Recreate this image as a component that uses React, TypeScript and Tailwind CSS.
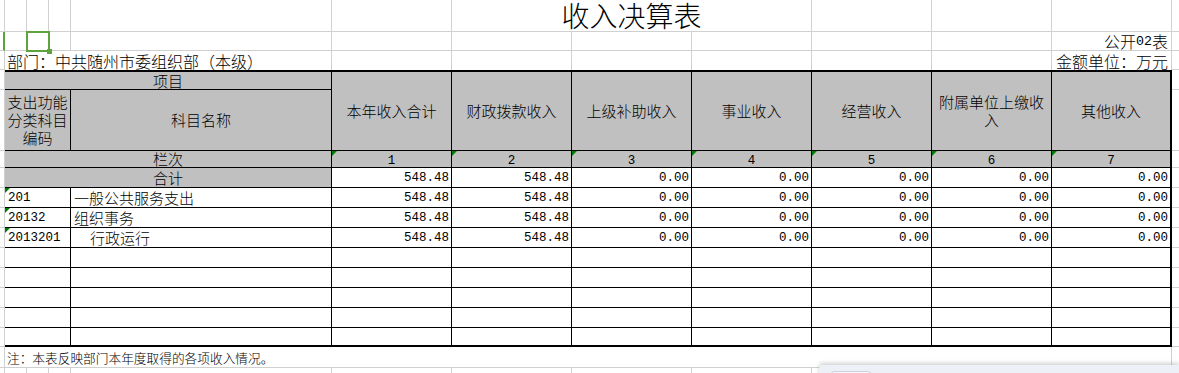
import React from "react"

// 收入决算表 — spreadsheet view

const GRID = "border-r border-b border-[#d0d0d0]"
const GRID_B = "border-b border-[#d0d0d0]"
const GRID_R = "border-r border-[#d0d0d0]"
const HEAD = "bg-[#c0c0c0]"
const MONO = "font-['Liberation_Mono',monospace] text-[12.5px]"

const heads = ["本年收入合计", "财政拨款收入", "上级补助收入", "事业收入", "经营收入", "附属单位上缴收入", "其他收入"]
const vals = ["548.48", "548.48", "0.00", "0.00", "0.00", "0.00", "0.00"]
const items = [
  { code: "201", name: "一般公共服务支出", indent: false },
  { code: "20132", name: "组织事务", indent: false },
  { code: "2013201", name: "行政运行", indent: true },
]

function Tri() {
  return (
    <span className="absolute left-0 top-0 h-0 w-0 border-t-[5px] border-r-[5px] border-t-[#008000] border-r-transparent" />
  )
}

// black border for E..K, the last column (K) carries the thick outer edge
function line(i: number) {
  return i === 6 ? "border-r-2 border-b border-black" : "border-r border-b border-black"
}

function ValueRow({ values }: { values: string[] }) {
  return (
    <>
      {values.map((v, i) => (
        <div key={i} className={`flex items-center justify-end pr-[2px] pt-[1px] ${MONO} ${line(i)}`}>
          {v}
        </div>
      ))}
    </>
  )
}

export default function App() {
  return (
    <div className="relative h-[373px] w-[1179px] overflow-hidden bg-white text-black font-light font-['Noto_Sans_CJK_SC',sans-serif]">
      <div className="grid grid-cols-[5px_22px_22px_22px_261px_120px_120px_120px_120px_120px_120px_120px_7px] grid-rows-[32px_19px_19px_20px_61px_17px_20px_20px_20px_20px_20px_20px_20px_20px_19px_21px_5px]">
        {/* row 1: title */}
        <div className={GRID} />
        <div className={GRID} />
        <div className={GRID} />
        <div className={GRID} />
        <div className={GRID} />
        <div className={GRID} />
        <div className={`col-span-3 flex items-start justify-center text-[28px] leading-[30px] ${GRID}`}>收入决算表</div>
        <div className={GRID} />
        <div className={GRID} />
        <div className={GRID} />
        <div className={GRID_B} />

        {/* row 2 */}
        <div className="border-b border-r-2 border-b-[#d0d0d0] border-r-[#5ea33d]" />
        <div className={GRID} />
        <div className={`relative ${GRID}`}>
          <div className="absolute -left-[1px] -top-[1px] z-10 h-[21px] w-[24px] border-2 border-[#5ea33d]" />
          <div className="absolute left-[20px] top-[17px] z-10 h-[5px] w-[5px] bg-[#5ea33d]" />
        </div>
        <div className={GRID} />
        <div className={GRID} />
        <div className={GRID} />
        <div className={GRID} />
        <div className={GRID} />
        <div className={GRID} />
        <div className={GRID} />
        <div className={GRID} />
        <div className={`flex items-center justify-end pr-[3px] text-[16px] leading-[19px] ${GRID}`}>
          公开<span className="font-['Liberation_Mono',monospace] text-[13.3px]">02</span>表
        </div>
        <div className={GRID_B} />

        {/* row 3 */}
        <div className={GRID} />
        <div className={`col-span-4 flex items-end pl-[2px] text-[16px] leading-[18px] whitespace-nowrap ${GRID_R}`}>
          部门：中共随州市委组织部（本级）
        </div>
        <div className={GRID_R} />
        <div className={GRID_R} />
        <div className={GRID_R} />
        <div className={GRID_R} />
        <div className={GRID_R} />
        <div className={GRID_R} />
        <div className={`flex items-end justify-end pr-[3px] text-[16px] leading-[18px] whitespace-nowrap ${GRID_R}`}>
          金额单位：万元
        </div>
        <div className={GRID_B} />

        {/* row 4-5: column heads */}
        <div className={GRID} />
        <div className={`col-span-4 flex items-center justify-center text-[15px] leading-[17px] border-t-2 border-r border-b border-black ${HEAD}`}>
          项目
        </div>
        {heads.map((h, i) => (
          <div
            key={h}
            className={`row-span-2 flex items-center justify-center px-[2px] text-center text-[15px] leading-[18px] border-t-2 ${line(i)} ${HEAD}`}
          >
            {h}
          </div>
        ))}
        <div className={GRID_B} />

        <div className={GRID} />
        <div className={`col-span-3 flex items-center justify-center text-center text-[15px] leading-[18px] border-r border-b border-black ${HEAD}`}>
          支出功能
          <br />
          分类科目
          <br />
          编码
        </div>
        <div className={`flex items-center justify-center text-[15px] leading-[18px] border-r border-b border-black ${HEAD}`}>
          科目名称
        </div>
        <div className={GRID_B} />

        {/* row 6: 栏次 */}
        <div className={GRID} />
        <div className={`col-span-4 flex items-center justify-center text-[15px] leading-[16px] border-r border-b border-black ${HEAD}`}>
          栏次
        </div>
        {[1, 2, 3, 4, 5, 6, 7].map((n, i) => (
          <div key={n} className={`relative flex items-start justify-center pt-[4px] leading-[12px] ${MONO} ${line(i)} ${HEAD}`}>
            <Tri />
            {n}
          </div>
        ))}
        <div className={GRID_B} />

        {/* row 7: 合计 */}
        <div className={GRID} />
        <div className={`col-span-4 flex items-center justify-center text-[15px] leading-[18px] border-r border-b border-black ${HEAD}`}>
          合计
        </div>
        <ValueRow values={vals} />
        <div className={GRID_B} />

        {/* rows 8-10: data */}
        {items.map((it) => (
          <React.Fragment key={it.code}>
            <div className={GRID} />
            <div className={`relative col-span-3 flex items-center pl-[3px] pt-[2px] ${MONO} border-r border-b border-black`}>
              <Tri />
              {it.code}
            </div>
            <div
              className={`flex items-center text-[15px] leading-[18px] border-r border-b border-black ${it.indent ? "pl-[19px]" : "pl-[3px]"}`}
            >
              {it.name}
            </div>
            <ValueRow values={vals} />
            <div className={GRID_B} />
          </React.Fragment>
        ))}

        {/* rows 11-15: empty */}
        {[0, 1, 2, 3].map((r) => (
          <React.Fragment key={r}>
            <div className={GRID} />
            <div className="col-span-3 border-r border-b border-black" />
            <div className="border-r border-b border-black" />
            <ValueRow values={["", "", "", "", "", "", ""]} />
            <div className={GRID_B} />
          </React.Fragment>
        ))}
        <div className={GRID} />
        <div className="col-span-3 border-r border-b-2 border-black" />
        <div className="border-r border-b-2 border-black" />
        {[0, 1, 2, 3, 4, 5].map((i) => (
          <div key={i} className="border-r border-b-2 border-black" />
        ))}
        <div className="border-r-2 border-b-2 border-black" />
        <div className={GRID_B} />

        {/* row 16: note */}
        <div className={GRID} />
        <div className={`col-span-11 flex items-center pl-[2px] pt-[1px] text-[12.7px] leading-[16px] whitespace-nowrap ${GRID}`}>
          注：本表反映部门本年度取得的各项收入情况。
        </div>
        <div className={GRID_B} />

        {/* row 17 */}
        {[0, 1, 2, 3, 4, 5, 6, 7, 8, 9, 10, 11].map((i) => (
          <div key={i} className={GRID_R} />
        ))}
        <div />
      </div>

      {/* floating panel at the bottom right */}
      <div className="absolute left-[819px] top-[365px] h-[20px] w-[360px] rounded-tl-[4px] bg-[#eef0f8] shadow-[0_-2px_4px_rgba(0,0,0,0.18)]">
        <div className="ml-[12px] mt-[6px] h-[12px] w-[40px] rounded-[3px] border border-[#cdd2e2] bg-[#f7f8fc]" />
      </div>
    </div>
  )
}
